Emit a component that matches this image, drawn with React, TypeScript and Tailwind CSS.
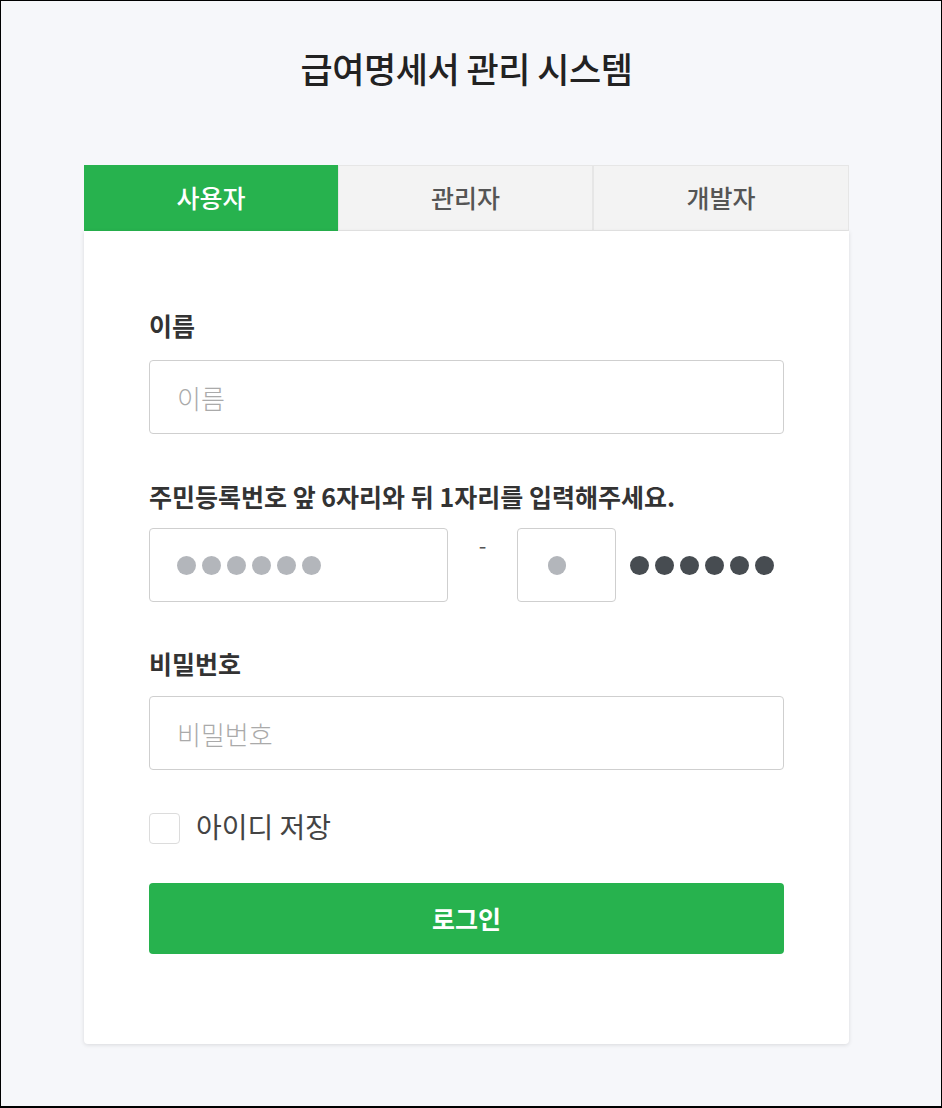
import React from "react";

const font = { fontFamily: '"Noto Sans CJK KR", "Noto Sans", sans-serif' };

function Dots({ n, cls }: { n: number; cls: string }) {
  return (
    <div className="flex items-center gap-[6px]">
      {Array.from({ length: n }).map((_, i) => (
        <span key={i} className={`block rounded-full ${cls}`} />
      ))}
    </div>
  );
}

export default function App() {
  return (
    <div
      className="w-[942px] h-[1108px] bg-[#f6f7fa] border border-black border-b-2 flex flex-col items-start"
      style={font}
    >
      <div className="ml-[83px] w-[765px] flex flex-col">
        <h1 className="mt-[43px] text-center text-[35px] font-medium text-[#222] leading-[48px] tracking-[-0.5px]">
          급여명세서 관리 시스템
        </h1>
        <div className="mt-[73px] flex h-[66px]">
          <div className="w-[254px] bg-[#27b24e] text-white text-[25px] font-medium flex items-center justify-center">
            사용자
          </div>
          <div className="w-[255px] bg-[#f3f3f3] border border-[#e6e6e6] text-[#555] text-[25px] font-medium flex items-center justify-center">
            관리자
          </div>
          <div className="w-[256px] bg-[#f3f3f3] border border-[#e6e6e6] text-[#555] text-[25px] font-medium flex items-center justify-center">
            개발자
          </div>
        </div>
        <div className="bg-white rounded-b-[4px] shadow-[0_1px_4px_rgba(0,0,0,0.12)] px-[65px] pt-[78px] pb-[90px]">
          <div className="text-[25px] font-bold text-[#333] leading-[32px]">이름</div>
          <div className="mt-[19px] h-[74px] border border-[#cfcfcf] rounded-[4px] flex items-center px-[27px] text-[26px] font-light text-[#aaa]">
            이름
          </div>
          <div className="mt-[46px] text-[25px] font-bold text-[#333] leading-[32px]">
            주민등록번호 앞 6자리와 뒤 1자리를 입력해주세요.
          </div>
          <div className="mt-[16px] flex items-start">
            <div className="w-[299px] h-[74px] border border-[#cfcfcf] rounded-[4px] flex items-center px-[27px]">
              <Dots n={6} cls="w-[19px] h-[19px] bg-[#b3b6bb]" />
            </div>
            <div className="w-[69px] text-center text-[22px] text-[#555] leading-[32px]">-</div>
            <div className="w-[99px] h-[74px] border border-[#cfcfcf] rounded-[4px] flex items-center pl-[30px]">
              <span className="block w-[18px] h-[19px] rounded-full bg-[#b3b6bb]" />
            </div>
            <div className="h-[74px] flex items-center ml-[14px]">
              <Dots n={6} cls="w-[19px] h-[19px] bg-[#474c51]" />
            </div>
          </div>
          <div className="mt-[45px] text-[25px] font-bold text-[#333] leading-[32px]">비밀번호</div>
          <div className="mt-[17px] h-[74px] border border-[#cfcfcf] rounded-[4px] flex items-center px-[27px] text-[26px] font-light text-[#aaa]">
            비밀번호
          </div>
          <div className="mt-[43px] flex items-center">
            <span className="block w-[31px] h-[31px] border border-[#dcdcdc] rounded-[4px]" />
            <span className="ml-[16px] text-[28px] text-[#444] leading-[32px] -mt-[6px]">아이디 저장</span>
          </div>
          <button className="mt-[39px] w-full h-[71px] bg-[#27b24e] rounded-[4px] text-white text-[25px] font-bold">
            로그인
          </button>
        </div>
      </div>
    </div>
  );
}
